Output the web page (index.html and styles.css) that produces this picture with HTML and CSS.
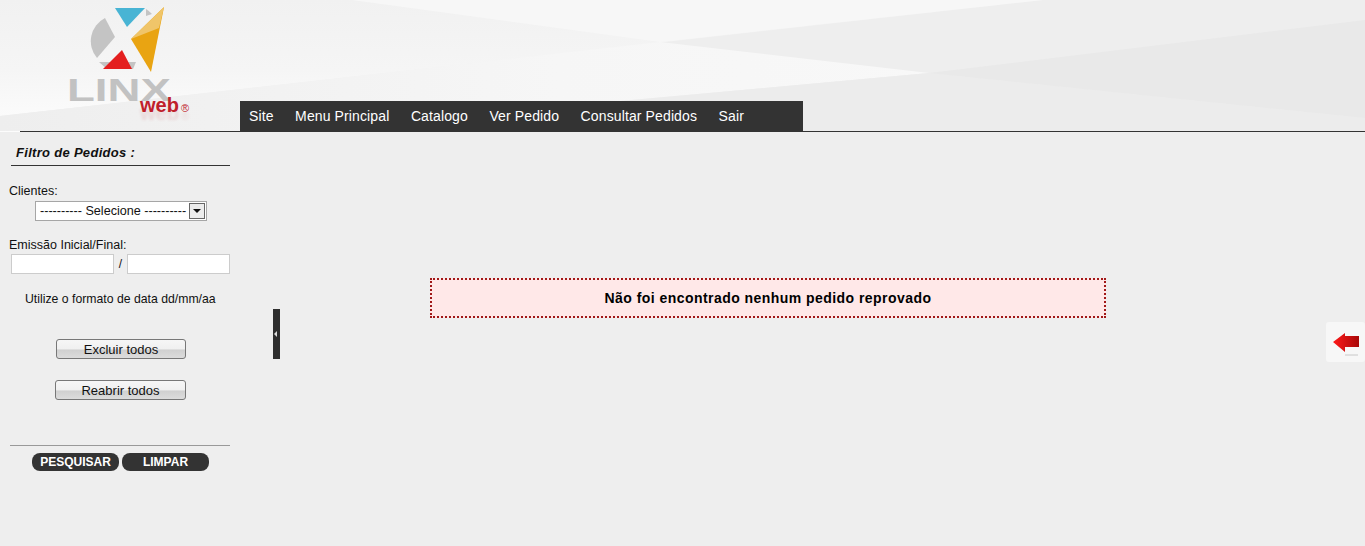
FILE: index.html
```html
<!DOCTYPE html>
<html lang="pt-BR">
<head>
    <meta charset="UTF-8">
    <title>Pedidos reprovados</title>
    <link rel="stylesheet" href="styles.css">
</head>
<body>
    <div class="header">
        <svg class="header-bg" width="1365" height="131" viewBox="0 0 1365 131">
            <defs>
                <linearGradient id="glow" x1="0" y1="0" x2="0" y2="1">
                    <stop offset="0" stop-color="#f1f1f1"/>
                    <stop offset="0.6" stop-color="#f5f5f5"/>
                    <stop offset="1" stop-color="#fbfbfb"/>
                </linearGradient>
                <linearGradient id="glow2" x1="0" y1="0" x2="1" y2="0">
                    <stop offset="0" stop-color="#eeeeee"/>
                    <stop offset="0.3" stop-color="#f2f2f2"/>
                    <stop offset="0.6" stop-color="#f6f6f6"/>
                    <stop offset="1" stop-color="#f8f8f8"/>
                </linearGradient>
            </defs>
            <rect width="1365" height="131" fill="#eeeeee"/>
            <path d="M0 0H1043L0 116Z" fill="url(#glow)"/>
            <path d="M352 0H1043L660 42Z" fill="#f7f7f7"/>
            <path d="M0 116L660 42L929 73L290 131H0Z" fill="url(#glow2)"/>
            <path d="M929 73L1365 118V131H290Z" fill="#ececec"/>
            <path d="M929 73L1365 20V118Z" fill="#e9e9e9"/>
        </svg>
        <div class="logo">
            <svg class="logo-mark" width="85" height="75" viewBox="85 0 85 75">
                <path d="M105 18L115 37L97 58A26 26 0 0 1 105 18Z" fill="#c4c4c4"/>
                <path d="M99 62H136L133 69H107Z" fill="#c4c4c4"/>
                <path d="M146 9A31 31 0 0 1 152 14L146 16Z" fill="#c4c4c4"/>
                <path d="M115 8H145L127 27Z" fill="#48b4d4"/>
                <path d="M164 7L151 72L131 39Z" fill="#e9a412"/>
                <path d="M164 7L159 28L131 39Z" fill="#f0c569"/>
                <path d="M122 50L132 69H103Z" fill="#e41f1f"/>
            </svg>
            <span class="logo-linx">LINX</span>
            <span class="logo-web">web<small>®</small></span>
        </div>
        <ul class="menu">
            <li><a href="#">Site</a></li>
            <li><a href="#">Menu Principal</a></li>
            <li><a href="#">Catalogo</a></li>
            <li><a href="#">Ver Pedido</a></li>
            <li><a href="#">Consultar Pedidos</a></li>
            <li><a href="#">Sair</a></li>
        </ul>
    </div>

    <div class="content">
        <div class="sidebar">
            <h2>Filtro de Pedidos :</h2>
            <label class="field-label" for="clientes">Clientes:</label>
            <div class="select-row">
                <div class="fake-select" id="clientes">
                    <span>---------- Selecione ----------</span>
                    <span class="select-arrow"></span>
                </div>
            </div>
            <label class="field-label date-label" for="inicio">Emissão Inicial/Final:</label>
            <div class="date-row">
                <input type="text" id="inicio">
                <span>/</span>
                <input type="text" id="fim">
            </div>
            <p class="hint">Utilize o formato de data dd/mm/aa</p>
            <button class="grey-btn btn-excluir">Excluir todos</button>
            <button class="grey-btn btn-reabrir">Reabrir todos</button>
            <div class="actions">
                <button class="dark-btn">PESQUISAR</button>
                <button class="dark-btn">LIMPAR</button>
            </div>
        </div>
        <div class="toggle"><span></span></div>
        <div class="main">
            <div class="message">Não foi encontrado nenhum pedido reprovado</div>
        </div>
        <a class="back" href="#">
            <svg width="27" height="28" viewBox="0 0 27 28">
                <defs>
                    <linearGradient id="arrow" x1="0" y1="0" x2="1" y2="0">
                        <stop offset="0" stop-color="#ff1a1a"/>
                        <stop offset="1" stop-color="#a80808"/>
                    </linearGradient>
                </defs>
                <path d="M1 14L13 5V8H27V19H13V24Z" fill="url(#arrow)"/>
                <path d="M13 27H26" stroke="#c8c8c8" stroke-width="1"/>
            </svg>
        </a>
    </div>
</body>
</html>
```

FILE: styles.css
```css
* {
    box-sizing: border-box;
}
html, body {
    margin: 0;
    height: 100%;
    overflow: hidden;
}
body {
    background: #eeeeee;
    font-family: "Liberation Sans", Arial, sans-serif;
    font-size: 12.5px;
    color: #111111;
}

/* header */
.header {
    position: relative;
    height: 132px;
    padding-top: 101px;
    padding-left: 240px;
    border-bottom: 1px solid #333333;
}
.header-bg {
    position: absolute;
    left: 0;
    top: 0;
}
.header::after {
    content: "";
    position: absolute;
    left: 0;
    bottom: -1px;
    width: 20px;
    height: 1px;
    background: #fcfcfc;
}
.logo {
    position: absolute;
    left: 68px;
    top: 0;
    width: 125px;
    height: 125px;
}
.logo-mark {
    position: absolute;
    left: 17px;
    top: 0;
}
.logo-linx {
    position: absolute;
    left: -1px;
    top: 73px;
    font-size: 31px;
    line-height: 36px;
    font-weight: bold;
    color: #c2c2c2;
    transform: scaleX(1.47);
    transform-origin: left;
}
.logo-web {
    position: absolute;
    left: 72px;
    top: 93px;
    font-size: 20px;
    line-height: 24px;
    font-weight: bold;
    color: #c0202a;
    text-shadow: 0 8px 3px rgba(192, 32, 42, 0.12);
}
.logo-web small {
    margin-left: 2px;
    font-size: 11px;
    font-weight: normal;
}
.menu {
    position: relative;
    display: flex;
    width: 563px;
    height: 30px;
    margin: 0;
    padding: 0;
    list-style: none;
    background: #333333;
}
.menu a {
    display: block;
    padding: 0 12.5px 0 9px;
    line-height: 30px;
    font-size: 14px;
    letter-spacing: 0.12px;
    color: #ffffff;
    text-decoration: none;
}

/* content */
.content {
    position: relative;
    display: flex;
    height: 414px;
}
.sidebar {
    width: 240px;
    flex-shrink: 0;
    padding: 13px 10px 0 9px;
}
.sidebar h2 {
    margin: 0 0 0 2px;
    padding: 0 0 5px 5px;
    border-bottom: 1px solid #333333;
    font-size: 13px;
    line-height: 15px;
    font-style: italic;
    letter-spacing: 0.3px;
}
.field-label {
    display: block;
    margin-top: 18px;
    line-height: 14px;
}
.select-row {
    padding: 3px 0 0 26px;
}
.fake-select {
    display: flex;
    justify-content: space-between;
    align-items: center;
    width: 172px;
    height: 20px;
    padding: 0 1px 0 4px;
    background: #ffffff;
    border: 1px solid #a6a6a6;
    font-size: 12.6px;
    white-space: nowrap;
}
.select-arrow {
    position: relative;
    width: 16px;
    height: 16px;
    flex-shrink: 0;
    background: #ececec;
    border: 1px solid #666666;
}
.select-arrow::after {
    content: "";
    position: absolute;
    left: 3px;
    top: 5px;
    border: 4px solid transparent;
    border-top: 4px solid #111111;
    border-bottom: 0;
}
.date-label {
    margin-top: 17px;
}
.date-row {
    display: flex;
    align-items: center;
    margin: 2px 0 0 2px;
}
.date-row input {
    width: 103px;
    height: 20px;
    padding: 0;
    border: 1px solid #cccccc;
    background: #ffffff;
}
.date-row span {
    width: 13px;
    text-align: center;
    font-size: 12px;
}
.hint {
    margin: 18px 0 0 16px;
    font-size: 12.25px;
    line-height: 14px;
}
.grey-btn {
    display: block;
    height: 20px;
    padding: 0;
    border: 1px solid #777777;
    border-radius: 3px;
    background: linear-gradient(#f6f6f6 0, #f0f0f0 50%, #d0d0d0 55%, #dcdcdc 100%);
    font: 13px "Liberation Sans", Arial, sans-serif;
    color: #111111;
}
.btn-excluir {
    width: 130px;
    margin: 33px 0 0 47px;
}
.btn-reabrir {
    width: 131px;
    margin: 21px 0 0 46px;
}
.actions {
    display: flex;
    gap: 3px;
    margin: 45px 0 0 1px;
    padding: 7px 0 0 22px;
    border-top: 1px solid #999999;
}
.dark-btn {
    width: 87px;
    height: 18px;
    padding: 0;
    border: none;
    border-radius: 8px;
    background: #333333;
    color: #ffffff;
    font: bold 12px "Liberation Sans", Arial, sans-serif;
}
.toggle {
    position: absolute;
    left: 273px;
    top: 177px;
    width: 7px;
    height: 50px;
    background: #2e2e2e;
}
.toggle span {
    position: absolute;
    left: 1px;
    top: 22px;
    border: 3px solid transparent;
    border-right: 3px solid #dddddd;
    border-left: 0;
}
.main {
    flex: 1;
    padding: 146px 259px 0 190px;
}
.message {
    width: 676px;
    height: 40px;
    border: 2px dotted #a01818;
    background: #ffe8e8;
    text-align: center;
    font-size: 14px;
    font-weight: bold;
    line-height: 36px;
    letter-spacing: 0.45px;
    color: #000000;
}
.back {
    position: absolute;
    right: 0;
    top: 190px;
    display: flex;
    justify-content: center;
    align-items: center;
    width: 39px;
    height: 40px;
    border-radius: 3px;
    background: #f7f7f7;
}
```
